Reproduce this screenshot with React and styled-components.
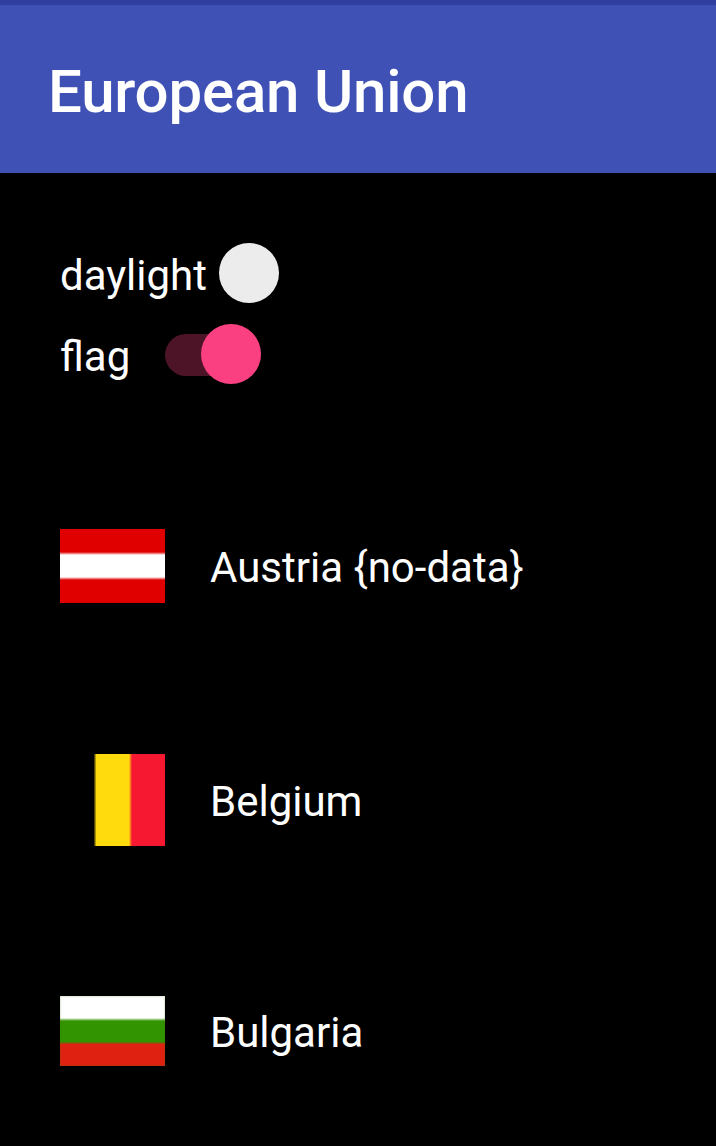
import React from "react";
import styled, { createGlobalStyle } from "styled-components";

const GlobalStyle = createGlobalStyle`
  * { box-sizing: border-box; }
  body { margin: 0; background: #000; font-family: Roboto, sans-serif; color: #fff; }
`;

const Screen = styled.div`
  height: 1146px;
  overflow: hidden;
  background: #000;
`;

const AppBar = styled.header`
  height: 173px;
  border-top: 5px solid #303f9f;
  background: #3f51b5;
  display: flex;
  align-items: center;
  padding: 5px 0 0 48px;
`;

const Title = styled.h1`
  margin: 0;
  font-size: 60px;
  line-height: 70px;
  font-weight: 500;
  letter-spacing: -0.2px;
  white-space: nowrap;
`;

const Settings = styled.section`
  padding: 60px 0 0 60px;
`;

const SettingRow = styled.label`
  display: flex;
  align-items: center;
  height: 81px;
`;

const Label = styled.span`
  font-size: 42px;
  line-height: 50px;
  white-space: nowrap;
  width: ${({ $width }) => $width}px;
  padding-top: 4px;
`;

const Track = styled.span`
  display: flex;
  align-items: center;
  justify-content: flex-end;
  width: ${({ $on }) => ($on ? 95.5 : 60)}px;
  height: 42px;
  border-radius: 21px;
  background: ${({ $on }) => ($on ? "#4d1427" : "transparent")};
`;

const Thumb = styled.span`
  width: 60px;
  height: 60px;
  flex: none;
  margin-bottom: 1px;
  border-radius: 50%;
  background: ${({ $on }) => ($on ? "#fb4081" : "#ececec")};
`;

const Countries = styled.ul`
  list-style: none;
  margin: 0;
  padding: 54px 0 0 60px;
`;

const Country = styled.li`
  display: flex;
  align-items: center;
  height: ${({ $height }) => $height}px;
`;

const Flag = styled.span`
  width: 105px;
  height: ${({ $height }) => $height}px;
  margin-right: 45px;
  flex: none;
  background: ${({ $stripes }) => $stripes};
  box-shadow: ${({ $edge }) => ($edge ? `inset 0 0 2px ${$edge}` : "none")};
`;

const Name = styled.span`
  font-size: 42px;
  line-height: 50px;
  padding-top: 4px;
  white-space: nowrap;
`;

const countries = [
  { name: "Austria {no-data}", row: 234, flag: 74,
    stripes: "linear-gradient(#e00000 23px, #fff 26px, #fff 48px, #e00000 51px)" },
  { name: "Belgium", row: 234, flag: 92,
    stripes: "linear-gradient(90deg, #000 33.5px, #ffda0c 36.5px, #ffda0c 69px, #f51830 72px)" },
  { name: "Bulgaria", row: 228, flag: 70, edge: "rgba(65, 130, 20, 0.55)",
    stripes: "linear-gradient(#fff 22px, #319400 25px, #319400 45.5px, #de2110 48.5px)" },
];

export default function App() {
  return (
    <Screen>
      <GlobalStyle />
      <AppBar><Title>European Union</Title></AppBar>
      <Settings>
        <SettingRow>
          <Label $width={158.5}>daylight</Label>
          <Track><Thumb /></Track>
        </SettingRow>
        <SettingRow>
          <Label $width={105}>flag</Label>
          <Track $on><Thumb $on /></Track>
        </SettingRow>
      </Settings>
      <Countries>
        {countries.map((c) => (
          <Country key={c.name} $height={c.row}>
            <Flag $height={c.flag} $stripes={c.stripes} $edge={c.edge} />
            <Name>{c.name}</Name>
          </Country>
        ))}
      </Countries>
    </Screen>
  );
}
